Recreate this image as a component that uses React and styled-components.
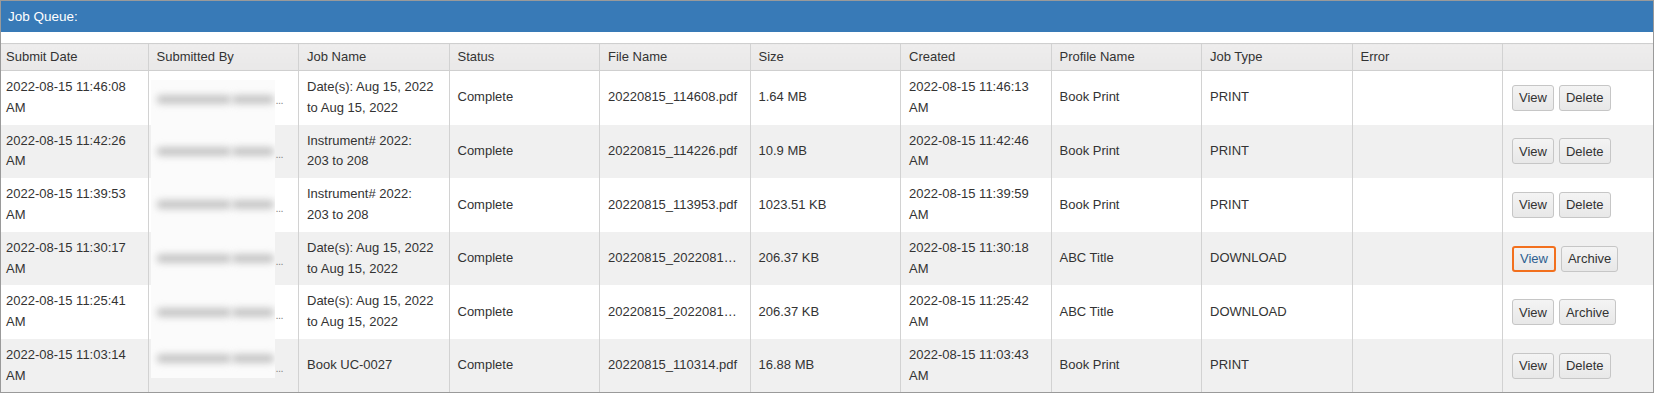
import React from "react";
import styled, { createGlobalStyle } from "styled-components";

const GlobalStyle = createGlobalStyle`
  html, body {
    margin: 0;
    padding: 0;
    background: #ffffff;
  }
  body {
    font-family: "Liberation Sans", Arial, sans-serif;
    font-size: 13px;
    color: #333333;
  }
`;

const jobs = [
  {
    submitted: ["2022-08-15 11:46:08", "AM"],
    jobName: ["Date(s): Aug 15, 2022", "to Aug 15, 2022"],
    file: "20220815_114608.pdf",
    size: "1.64 MB",
    created: ["2022-08-15 11:46:13", "AM"],
    profile: "Book Print",
    type: "PRINT",
    action: "Delete",
  },
  {
    submitted: ["2022-08-15 11:42:26", "AM"],
    jobName: ["Instrument# 2022:", "203 to 208"],
    file: "20220815_114226.pdf",
    size: "10.9 MB",
    created: ["2022-08-15 11:42:46", "AM"],
    profile: "Book Print",
    type: "PRINT",
    action: "Delete",
  },
  {
    submitted: ["2022-08-15 11:39:53", "AM"],
    jobName: ["Instrument# 2022:", "203 to 208"],
    file: "20220815_113953.pdf",
    size: "1023.51 KB",
    created: ["2022-08-15 11:39:59", "AM"],
    profile: "Book Print",
    type: "PRINT",
    action: "Delete",
  },
  {
    submitted: ["2022-08-15 11:30:17", "AM"],
    jobName: ["Date(s): Aug 15, 2022", "to Aug 15, 2022"],
    file: "20220815_2022081…",
    size: "206.37 KB",
    created: ["2022-08-15 11:30:18", "AM"],
    profile: "ABC Title",
    type: "DOWNLOAD",
    action: "Archive",
    focused: true,
  },
  {
    submitted: ["2022-08-15 11:25:41", "AM"],
    jobName: ["Date(s): Aug 15, 2022", "to Aug 15, 2022"],
    file: "20220815_2022081…",
    size: "206.37 KB",
    created: ["2022-08-15 11:25:42", "AM"],
    profile: "ABC Title",
    type: "DOWNLOAD",
    action: "Archive",
  },
  {
    submitted: ["2022-08-15 11:03:14", "AM"],
    jobName: ["Book UC-0027"],
    file: "20220815_110314.pdf",
    size: "16.88 MB",
    created: ["2022-08-15 11:03:43", "AM"],
    profile: "Book Print",
    type: "PRINT",
    action: "Delete",
  },
];

const headers = [
  "Submit Date",
  "Submitted By",
  "Job Name",
  "Status",
  "File Name",
  "Size",
  "Created",
  "Profile Name",
  "Job Type",
  "Error",
  "",
];

const Lines = ({ lines }) =>
  lines.map((l, i) => (
    <React.Fragment key={i}>
      {i > 0 && <br />}
      {l}
    </React.Fragment>
  ));

const App = () => {
  return (
    <>
      <GlobalStyle />
      <Panel>
        <PanelTitle>Job Queue:</PanelTitle>
        <Spacer />
        <Table>
          <colgroup>
            <col style={{ width: "147px" }} />
            {headers.slice(1).map((_, i) => (
              <col key={i} />
            ))}
          </colgroup>
          <thead>
            <tr>
              {headers.map((h, i) => (
                <Th key={i}>{h}</Th>
              ))}
            </tr>
          </thead>
          <tbody>
            {jobs.map((job, i) => (
              <Row key={i} striped={i % 2 === 1}>
                <Td>
                  <Lines lines={job.submitted} />
                </Td>
                <RedactCell>
                  <RedactWrap>
                    <Redacted first={i === 0} last={i === jobs.length - 1}>
                      <BlurBar w={74} />
                      <BlurBar w={42} />
                    </Redacted>
                    <Dots>...</Dots>
                  </RedactWrap>
                </RedactCell>
                <Td>
                  <Lines lines={job.jobName} />
                </Td>
                <Td>Complete</Td>
                <Td>{job.file}</Td>
                <Td>{job.size}</Td>
                <Td>
                  <Lines lines={job.created} />
                </Td>
                <Td>{job.profile}</Td>
                <Td>{job.type}</Td>
                <Td />
                <ActionCell>
                  <Button focused={job.focused}>View</Button>
                  <Button>{job.action}</Button>
                </ActionCell>
              </Row>
            ))}
          </tbody>
        </Table>
      </Panel>
    </>
  );
};

const Panel = styled.div`
  width: 1654px;
  height: 393px;
  box-sizing: border-box;
  border: 1px solid #9a9a9a;
  overflow: hidden;
  background: #ffffff;
`;

const PanelTitle = styled.div`
  height: 31px;
  line-height: 31px;
  padding: 0 7px;
  background: #387ab7;
  color: #ffffff;
  font-weight: 400;
  font-size: 13.5px;
`;

const Spacer = styled.div`
  height: 11px;
`;

const Table = styled.table`
  width: 100%;
  table-layout: fixed;
  border-collapse: collapse;
`;

const Th = styled.th`
  text-align: left;
  font-weight: 400;
  color: #333333;
  padding: 3px 8px 3px 8px;
  line-height: 20px;
  background: linear-gradient(#eeeded, #e9e8e8);
  border-top: 1px solid #cfcfcf;
  border-bottom: 1px solid #cfcfcf;
  border-left: 1px solid #d2d2d2;
  white-space: nowrap;

  &:first-child {
    border-left: none;
    padding-left: 5px;
  }
`;

const Row = styled.tr`
  background: ${({ striped }) => (striped ? "#f0f0f0" : "#ffffff")};
  height: 53.5px;
`;

const Td = styled.td`
  padding: 6px 8px;
  line-height: 20.8px;
  vertical-align: middle;
  border-left: 1px solid #d2d2d2;
  white-space: nowrap;
  overflow: hidden;

  &:first-child {
    border-left: none;
    padding-left: 5px;
  }
`;

const RedactCell = styled(Td)`
  padding: 0 0 0 2px;
  height: 53.5px;
`;

const RedactWrap = styled.div`
  display: flex;
  align-items: stretch;
  height: 53.5px;
`;

const Redacted = styled.div`
  width: 124px;
  margin-top: ${({ first }) => (first ? "9px" : "0")};
  margin-bottom: ${({ last }) => (last ? "15px" : "0")};
  background: #fbfbfb;
  display: flex;
  align-items: center;
  gap: 1px;
  padding: ${({ first }) => (first ? "0 0 6px 6px" : "0 0 0 6px")};
  box-sizing: border-box;
  overflow: hidden;
`;

const BlurBar = styled.div`
  width: ${({ w }) => w}px;
  height: 9px;
  background: #c6c6c6;
  border-radius: 4px;
  filter: blur(3.5px);
  flex-shrink: 0;
`;

const Dots = styled.span`
  align-self: center;
  margin-top: 6px;
  padding-left: 1px;
  color: #888888;
  font-size: 11px;
  letter-spacing: -0.5px;
`;

const ActionCell = styled(Td)`
  padding-left: 9px;
`;

const Button = styled.button`
  height: 26px;
  padding: 0 6px;
  margin-right: 5px;
  font-family: "Liberation Sans", Arial, sans-serif;
  font-size: 13px;
  color: ${({ focused }) => (focused ? "#2d5f90" : "#333333")};
  background: linear-gradient(#f4f4f4, #e8e8e8);
  border: ${({ focused }) => (focused ? "2px solid #f2701e" : "1px solid #c6c6c6")};
  border-radius: 3px;
  vertical-align: middle;
  cursor: pointer;
  box-sizing: border-box;
`;

export default App;
